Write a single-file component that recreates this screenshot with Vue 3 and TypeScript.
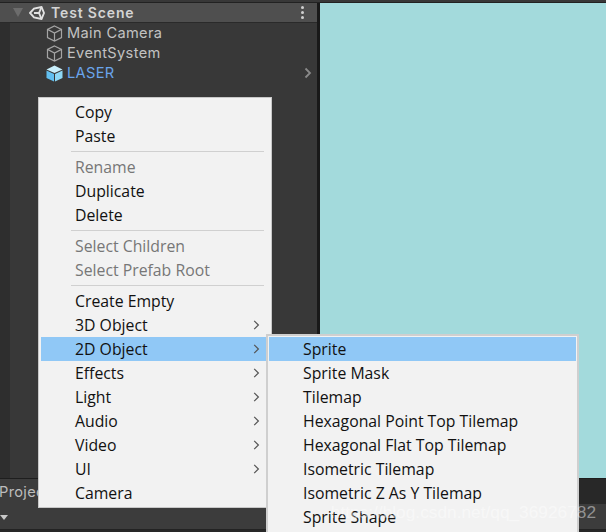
<script setup lang="ts">
interface Item { t?: string; dis?: boolean; sub?: boolean; hi?: boolean; sep?: boolean }
const main: Item[] = [
  { t: 'Copy' }, { t: 'Paste' }, { sep: true },
  { t: 'Rename', dis: true }, { t: 'Duplicate' }, { t: 'Delete' }, { sep: true },
  { t: 'Select Children', dis: true }, { t: 'Select Prefab Root', dis: true }, { sep: true },
  { t: 'Create Empty' }, { t: '3D Object', sub: true }, { t: '2D Object', sub: true, hi: true },
  { t: 'Effects', sub: true }, { t: 'Light', sub: true }, { t: 'Audio', sub: true },
  { t: 'Video', sub: true }, { t: 'UI', sub: true }, { t: 'Camera' },
]
const subMenu: Item[] = [
  { t: 'Sprite', hi: true }, { t: 'Sprite Mask' }, { t: 'Tilemap' },
  { t: 'Hexagonal Point Top Tilemap' }, { t: 'Hexagonal Flat Top Tilemap' },
  { t: 'Isometric Tilemap' }, { t: 'Isometric Z As Y Tilemap' }, { t: 'Sprite Shape' },
]
const rows = [
  { t: 'Main Camera', sel: false }, { t: 'EventSystem', sel: false }, { t: 'LASER', sel: true },
]
</script>

<template>
  <div class="page">
    <div class="strip"></div>
    <div class="top">
      <section class="hier">
        <div class="scene">
          <span class="tri"></span>
          <svg class="unity" width="16" height="14" viewBox="0 0 16 14" fill="none" stroke="#e2e2e2" stroke-width="1.9">
            <path d="M1 7 L5 2.6 L12.5 1 L15 7 L12.5 13 L5 11.4 Z" />
            <path d="M5 7 H10 L12.5 1 M10 7 L12.5 13" />
          </svg>
          <span class="scene-name">Test Scene</span>
          <span class="dots"><i></i><i></i><i></i></span>
        </div>
        <div class="tree">
          <div v-for="r in rows" :key="r.t" class="row" :class="{ sel: r.sel }">
            <svg width="17" height="17" viewBox="0 0 17 17">
              <template v-if="r.sel">
                <path d="M8.5 0.5 L16.5 4.4 L8.5 8 L0.5 4.4 Z" fill="#c8effc" />
                <path d="M0.5 5.4 L8 8.9 V16.5 L0.5 13 Z" fill="#62bff0" />
                <path d="M16.5 5.4 L9 8.9 V16.5 L16.5 13 Z" fill="#8ed8f6" />
              </template>
              <g v-else fill="none" stroke="#a4a4a4" stroke-width="1.2">
                <path d="M8.5 1 L15.5 4.4 V12.6 L8.5 16 L1.5 12.6 V4.4 Z" />
                <path d="M1.5 4.4 L8.5 8 L15.5 4.4 M8.5 8 V16" />
              </g>
            </svg>
            <span>{{ r.t }}</span>
            <svg v-if="r.sel" class="more" width="8" height="12" viewBox="0 0 8 12" fill="none" stroke="#8a8a8a" stroke-width="1.8">
              <path d="M1.5 1.5 L6 6 L1.5 10.5" />
            </svg>
          </div>
        </div>
      </section>
      <section class="view"></section>
    </div>
    <div class="bottom">
      <div class="tabs"><span class="project">Project</span></div>
      <div class="tools"><span class="drop"></span></div>
      <span class="mark">https://blog.csdn.net/qq_36926782</span>
    </div>

    <div class="menu main">
      <template v-for="(m, i) in main" :key="i">
        <div v-if="m.sep" class="sep"></div>
        <div v-else class="item" :class="{ dis: m.dis, hi: m.hi }">
          <span>{{ m.t }}</span>
          <svg v-if="m.sub" class="arrow" width="7" height="10" viewBox="0 0 7 10" fill="none" stroke="#555" stroke-width="1.2">
            <path d="M1.2 0.8 L5.4 5 L1.2 9.2" />
          </svg>
        </div>
      </template>
    </div>
    <div class="menu second">
      <div v-for="m in subMenu" :key="m.t" class="item" :class="{ hi: m.hi }">
        <span>{{ m.t }}</span>
      </div>
    </div>
  </div>
</template>

<style>
html, body { margin: 0; background: #383838; }
</style>

<style scoped>
.page {
  position: relative;
  width: 606px;
  height: 532px;
  overflow: hidden;
  display: flex;
  flex-direction: column;
  background: #383838;
  font-family: Inter, "Noto Sans", sans-serif;
}
.strip { height: 3px; background: #383838; flex: none; box-shadow: inset 0 -1px 0 #222; }
.top { display: flex; height: 475px; flex: none; }
.hier {
  width: 317px;
  background: #383838;
  border-right: 3px solid #191919;
  display: flex;
  flex-direction: column;
}
.scene {
  display: flex;
  align-items: center;
  height: 19px;
  flex: none;
  background: #4f4f4f;
  border-bottom: 1px solid #2a2a2a;
  padding-left: 13px;
}
.tri {
  width: 0; height: 0;
  border-left: 5px solid transparent;
  border-right: 5px solid transparent;
  border-top: 9px solid #6c6c6c;
}
.unity { margin-left: 6px; }
.scene-name {
  margin-left: 6px;
  font-size: 14px;
  font-weight: 600;
  color: #d4d4d4;
  letter-spacing: 0.85px;
}
.dots { margin-left: auto; margin-right: 13px; display: flex; flex-direction: column; gap: 2px; }
.dots i { width: 3px; height: 3px; border-radius: 50%; background: #cfcfcf; }
.tree { flex: 1; padding-left: 36px; border-left: 10px solid #2e2e2e; }
.row {
  display: flex;
  align-items: center;
  height: 20px;
  gap: 4px;
  font-size: 14.6px;
  color: #c2c2c2;
  letter-spacing: 0.35px;
}
.row.sel { color: #6aa5ec; }
.more { margin-left: auto; margin-right: 5px; }
.view { flex: 1; background: #a3dadc; }
.bottom { position: relative; flex: 1; display: flex; flex-direction: column; border-top: 1px solid #1e1e1e; background: #282828; }
.tabs { height: 25px; display: flex; align-items: center; }
.project {
  width: 100px;
  height: 100%;
  display: flex;
  align-items: center;
  background: #3c3c3c;
  color: #bdbdbd;
  font-size: 14.6px;
  letter-spacing: 0.35px;
  text-indent: -1px;
}
.tools { height: 25px; background: #3c3c3c; border-bottom: 1px solid #232323; position: relative; }
.drop {
  position: absolute; left: 0; top: 11px;
  width: 0; height: 0;
  border-left: 4px solid transparent;
  border-right: 4px solid transparent;
  border-top: 5px solid #c8c8c8;
}
.mark {
  position: absolute;
  right: 10px;
  top: 23px;
  font-family: "Liberation Sans", sans-serif;
  font-size: 17.3px;
  color: rgba(255, 255, 255, 0.45);
  z-index: 3;
}
.menu {
  position: absolute;
  box-sizing: border-box;
  background: #f2f2f2;
  border: 2px solid #cfcfcf;
  font-family: "Open Sans", "Noto Sans", sans-serif;
  font-size: 15.8px;
  color: #111;
}
.main { left: 38px; top: 97px; width: 234px; height: 411px; padding: 2px 0; border-width: 1px; border-color: #c8c8c8; }
.second { left: 266px; top: 334px; width: 313px; height: 210px; padding: 1px; z-index: 2; }
.item {
  position: relative;
  display: flex;
  align-items: center;
  height: 24px;
  margin-left: 2px;
}
.main .item { padding-left: 34px; }
.second .item { padding-left: 34px; margin-left: 0; margin-right: 0; }
.item.hi { background: #90c8f6; }
.item.dis { color: #777; }
.sep { height: 1px; margin: 3px 7px 3px 32px; background: #d0d0d0; }
.arrow { position: absolute; right: 11px; top: 7px; }
</style>
